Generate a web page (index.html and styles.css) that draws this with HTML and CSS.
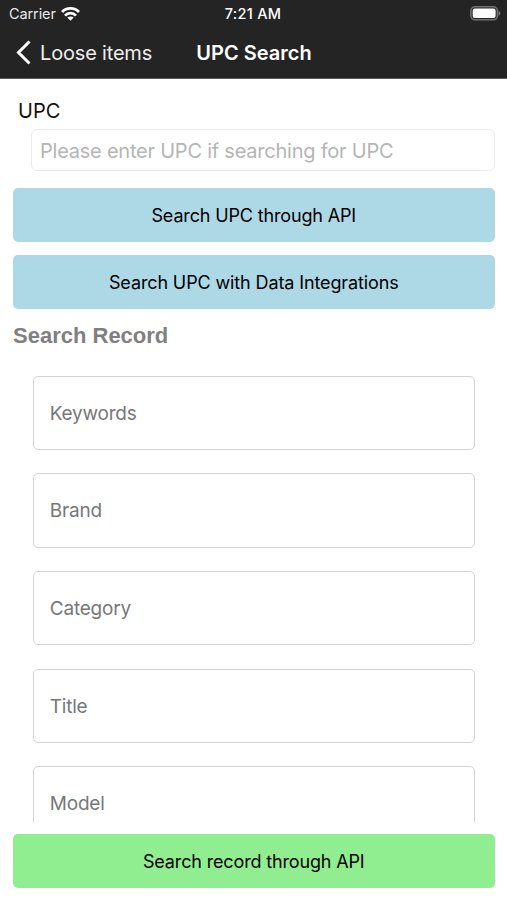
FILE: index.html
```html
<!DOCTYPE html>
<html lang="en">
<head>
<meta charset="utf-8">
<title>UPC Search</title>
<link rel="stylesheet" href="styles.css">
</head>
<body>
<header class="top">
  <div class="status">
    <div class="carrier"><span>Carrier</span>
      <svg class="wifi" width="19" height="14" viewBox="0 0 19 14" fill="none" stroke="#fff" stroke-width="2.8"><path d="M1 5C5.500.2 13.500.2 18 5M4 8.600c3-3.300 8-3.300 11 0"/><path d="m9.500 13.800-3.200-3.300c1.700-1.500 4.700-1.500 6.400 0z" fill="#fff" stroke="none"/></svg>
    </div>
    <span class="time">7:21 AM</span>
    <svg class="battery" width="31" height="15" viewBox="0 0 31 15"><rect x=".9" y=".8" width="26.500" height="13" rx="4" fill="none" stroke="#707070" stroke-width="1.600"/><rect x="2.700" y="2.600" width="22.900" height="9.400" rx="2" fill="#fff"/><path d="M28.600 4.900c2.300.8 2.300 4 0 4.800z" fill="#777"/></svg>
  </div>
  <nav class="nav">
    <a class="back"><svg width="16" height="26" viewBox="0 0 16 26" fill="none" stroke="#fff" stroke-width="3"><path d="M13.500 1.500 2.500 12.500l11 11"/></svg><span>Loose items</span></a>
    <h1 class="title">UPC Search</h1>
  </nav>
</header>
<main class="content">
  <div class="upc-label">UPC</div>
  <div class="upc-input"><span>Please enter UPC if searching for UPC</span></div>
  <button class="button">Search UPC through API</button>
  <button class="button data">Search UPC with Data Integrations</button>
  <h2 class="heading">Search Record</h2>
  <div class="fields">
    <div class="field"><span>Keywords</span></div>
    <div class="field"><span>Brand</span></div>
    <div class="field"><span>Category</span></div>
    <div class="field"><span>Title</span></div>
    <div class="field"><span>Model</span></div>
  </div>
</main>
<footer class="footer"><button class="button green">Search record through API</button></footer>
</body>
</html>
```
FILE: styles.css
```css
* { box-sizing: border-box; }
body { margin: 0; width: 507px; height: 900px; overflow: hidden; display: flex; flex-direction: column; background: #fff; font-family: Inter, sans-serif; }
.top { height: 79px; flex: none; background: #242424; border-bottom: 1px solid #5c5c5c; color: #fff; }
.status { height: 27px; display: grid; grid-template-columns: 1fr auto 1fr; align-items: center; padding: 0 6px 0 9px; }
.carrier { display: flex; align-items: center; gap: 6px; font-size: 14.5px; letter-spacing: -0.1px; color: #e8e8e8; }
.wifi { margin-left: -1px; }
.time { margin: 0 2px 0 -2px; font-size: 14.5px; font-weight: 500; letter-spacing: 0.3px; }
.battery { justify-self: end; }
.nav { height: 51px; display: grid; grid-template-columns: 1fr auto 1fr; align-items: center; padding: 0 15px 0 16px; }
.back { display: flex; align-items: center; gap: 8px; font-size: 20px; letter-spacing: -0.18px; white-space: nowrap; color: #eee; }
.title { margin: 0; font-size: 20px; font-weight: 600; }
.content { height: 743px; flex: none; overflow: hidden; padding: 18px 12.5px 0 13px; }
.upc-label { height: 32px; padding-left: 5px; font-size: 20px; line-height: 28px; color: #111; }
.upc-input { height: 42px; margin: 0 0 17px 18px; border: 1px solid #ebebeb; border-radius: 6px; padding-left: 8px; line-height: 42px; font-size: 20px; letter-spacing: -0.23px; color: #b5b5b5; }
.button { display: block; width: 100%; height: 54px; margin: 0 0 13px; padding: 0; border: 0; border-radius: 5px; background: #add8e6; color: #000; font: 18px Inter, sans-serif; letter-spacing: -0.15px; }
.data { letter-spacing: -0.12px; }
.heading { margin: 0; height: 53.5px; font: bold 22px/27px "Liberation Sans", sans-serif; color: #808080; }
.fields { margin: 0 19.5px; display: grid; gap: 23.2px; }
.field { height: 74.5px; border: 1px solid #d2d2d2; border-radius: 5px; padding-left: 16.3px; font-size: 19px; line-height: 74.8px; letter-spacing: -0.22px; color: #777; }
.footer { flex: none; padding: 12px 12.5px 12px 13px; }
.green { background: #90ee90; }
```
